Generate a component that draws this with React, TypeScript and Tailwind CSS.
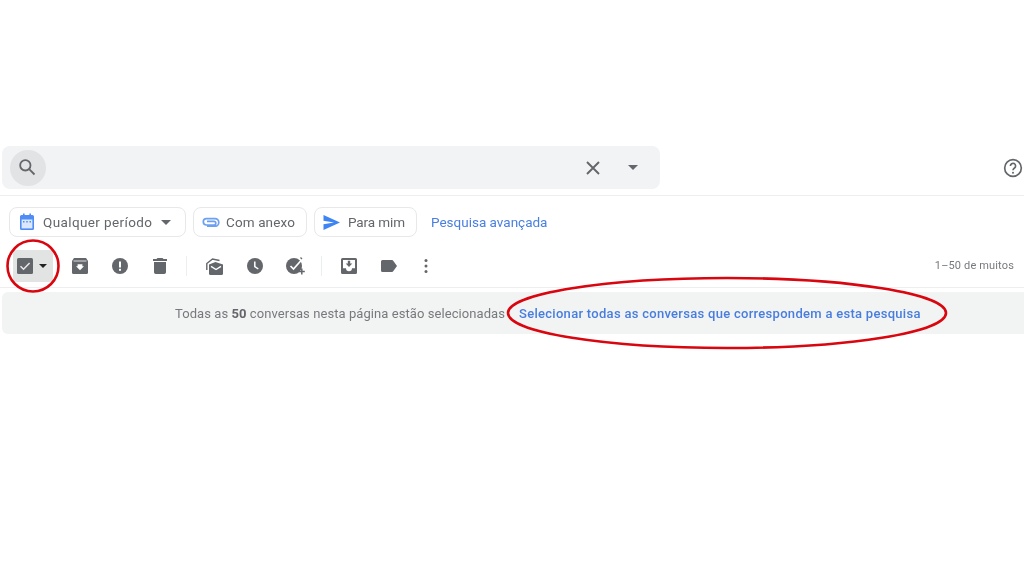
const G = "#63666a";

function Slot({ children, className = "w-10" }: { children: React.ReactNode; className?: string }) {
  return <div className={`flex h-8 items-center justify-center ${className}`}>{children}</div>;
}

function Chip({ icon, label, caret, className, textClass }: { icon: React.ReactNode; label: string; caret?: boolean; className: string; textClass: string }) {
  return (
    <div className={`flex h-[30px] items-center rounded-lg border border-[#e6e8ea] bg-white ${className}`}>
      {icon}
      <span className={`text-[13.5px] text-[#63666a] ${textClass}`}>{label}</span>
      {caret && (
        <svg width="10" height="5" viewBox="0 0 10 5" fill={G} className="ml-[9px]">
          <path d="M0 0h10L5 5z" />
        </svg>
      )}
    </div>
  );
}

export default function App() {
  return (
    <div className="relative h-[576px] w-[1024px] overflow-hidden bg-white pt-[146px] font-['Roboto',sans-serif] blur-[0.45px]">
      <div className="flex h-[43px] items-center pl-[2px] pr-[1px]">
        <div className="flex h-[43px] w-[658px] items-center rounded-lg bg-[#f1f3f4] pl-2 pr-[22px]">
          <div className="flex h-9 w-9 items-center justify-center rounded-full bg-[#e2e3e5]">
            <svg width="20" height="20" viewBox="0 0 24 24" fill="none" stroke={G} strokeWidth="2.2" className="-ml-[2px] -mt-[2px]">
              <circle cx="10" cy="10" r="6.2" />
              <path d="M14.6 14.6 21 21" />
            </svg>
          </div>
          <div className="flex-1" />
          <svg width="18" height="18" viewBox="0 0 18 18" fill="none" stroke={G} strokeWidth="1.9" className="mr-[26px]">
            <path d="M3 3l12 12M15 3 3 15" />
          </svg>
          <svg width="10" height="5" viewBox="0 0 10 5" fill={G}>
            <path d="M0 0h10L5 5z" />
          </svg>
        </div>
        <div className="flex-1" />
        <svg width="20" height="20" viewBox="0 0 24 24" fill="none" stroke={G} strokeWidth="2">
          <circle cx="12" cy="12" r="10" />
          <path d="M8.9 9.5a3.1 3.1 0 1 1 4.9 2.5c-1.1.8-1.8 1.4-1.8 2.8" />
          <circle cx="12" cy="17.6" r="1.2" fill={G} stroke="none" />
        </svg>
      </div>

      <div className="mt-[6px] h-px bg-[#eceef0]" />

      <div className="mt-[11px] flex items-center pl-[9px]">
        <Chip
          className="w-[177px] pl-2"
          textClass="tracking-[0.38px]"
          caret
          label="Qualquer período"
          icon={
            <svg width="18" height="18" viewBox="0 0 18 18" className="mr-[7px] shrink-0">
              <path d="M5 0.500h1.600V2h4.800V0.500H13V2h1.500A1.500 1.500 0 0 1 16 3.500v12a1.500 1.500 0 0 1-1.500 1.500h-11A1.500 1.500 0 0 1 2 15.500v-12A1.500 1.500 0 0 1 3.500 2H5z" fill="#4f8df5" />
              <rect x="3.600" y="6.500" width="10.800" height="8.900" fill="#dbe8fd" />
              <path d="M5 8h1.500v1.500H5zM8.250 8h1.500v1.500h-1.500zM11.500 8H13v1.500h-1.500z" fill="#4f8df5" />
            </svg>
          }
        />
        <Chip
          className="ml-[7px] w-[114px] pl-2"
          textClass="tracking-[0.12px]"
          label="Com anexo"
          icon={
            <svg width="18" height="10" viewBox="0 0 18 10" fill="none" className="mr-[6px] shrink-0">
              <path d="M5 9.200h8a3.800 3.800 0 0 0 0-7.600H4.500a3.200 3.200 0 0 0 0 6.400H12a1.800 1.800 0 0 0 0-3.600H5" stroke="#6ea0f2" strokeWidth="1.700" />
            </svg>
          }
        />
        <Chip
          className="ml-[7px] w-[103px] pl-2"
          textClass="tracking-[-0.1px]"
          label="Para mim"
          icon={
            <svg width="17" height="15" viewBox="0 0 17 15" className="mr-[8px] shrink-0">
              <path d="M0.500 0 17 7.500 0.500 15V9.300L11 7.500 0.500 5.700z" fill="#3f84f3" />
            </svg>
          }
        />
        <span className="ml-[14px] text-[13.5px] tracking-[0px] text-[#4a7fe0]">Pesquisa avançada</span>
      </div>

      <div className="mt-[13px] flex h-8 items-center pl-[13px] pr-[10px]">
        <div className="flex h-8 w-10 items-center rounded-sm bg-[#e2e3e3] pl-[4px]">
          <svg width="16" height="16" viewBox="0 0 16 16">
            <rect width="16" height="16" rx="1.500" fill={G} />
            <path d="M3.500 8.300 6.500 11.200 12.600 5" fill="none" stroke="#e8e8e8" strokeWidth="1.500" />
          </svg>
          <svg width="8" height="4" viewBox="0 0 8 4" fill="#222" className="ml-[6px]">
            <path d="M0 0h8L4 4z" />
          </svg>
        </div>
        <Slot className="ml-[7px] w-10">
          <svg width="16" height="16" viewBox="0 0 16 16" fill={G}>
            <path d="M2 0h12l2 3v11.500a1.500 1.500 0 0 1-1.500 1.500h-13A1.500 1.500 0 0 1 0 14.500V3z" />
            <path d="M1.500 3h13" stroke="#fff" strokeWidth="0.800" />
            <path d="M5 5.500h6V8h2l-5 5-5-5h2z" fill="#fff" transform="translate(1.600 1.800) scale(.8)" />
          </svg>
        </Slot>
        <Slot>
          <svg width="16" height="16" viewBox="0 0 16 16" fill={G}>
            <circle cx="8" cy="8" r="8" />
            <rect x="7" y="3.500" width="2" height="6" fill="#fff" />
            <rect x="7" y="10.800" width="2" height="2" fill="#fff" />
          </svg>
        </Slot>
        <Slot>
          <svg width="14" height="16" viewBox="0 0 14 16" fill={G}>
            <path d="M4.500 0h5l1 1H14v2H0V1h3.500zM1 4h12v10.200A1.800 1.800 0 0 1 11.200 16H2.800A1.800 1.800 0 0 1 1 14.200z" />
          </svg>
        </Slot>
        <div className="ml-[6px] h-5 w-px bg-[#eceef0]" />
        <Slot className="ml-[8px] w-10">
          <svg width="18" height="17" viewBox="0 0 18 17" fill="none">
            <path d="M0.800 12V5.500L6.500 1 13.500 2.500" stroke={G} strokeWidth="1.400" />
            <path d="M3 6.500 9.500 4 17 6.500v9A1.500 1.500 0 0 1 15.500 17h-11A1.500 1.500 0 0 1 3 15.500z" fill={G} />
            <path d="M5 8.300 10 11.500l5-3.200" stroke="#fff" strokeWidth="1.400" />
          </svg>
        </Slot>
        <Slot>
          <svg width="16" height="16" viewBox="0 0 16 16">
            <circle cx="8" cy="8" r="8" fill={G} />
            <path d="M7.800 3.500V8.500L11.300 11" fill="none" stroke="#fff" strokeWidth="1.500" />
          </svg>
        </Slot>
        <Slot>
          <svg width="19" height="18" viewBox="0 0 19 18">
            <circle cx="8" cy="9" r="8" fill={G} />
            <path d="M4.500 9 7.500 12 15.500 3" fill="none" stroke="#fff" strokeWidth="1.700" />
            <path d="M14.500 0.500 16 2" stroke={G} strokeWidth="1.200" />
            <path d="M15.800 11.500v6M12.800 14.500h6" stroke={G} strokeWidth="1.500" />
          </svg>
        </Slot>
        <div className="ml-[6px] h-5 w-px bg-[#eceef0]" />
        <Slot className="ml-[7px] w-10">
          <svg width="16" height="16" viewBox="0 0 16 16">
            <path d="M1.500 0h13A1.500 1.500 0 0 1 16 1.500v13a1.500 1.500 0 0 1-1.500 1.500h-13A1.500 1.500 0 0 1 0 14.500v-13A1.500 1.500 0 0 1 1.500 0z" fill={G} />
            <path d="M2 2h12v8.200h-3a3 3 0 0 1-6 0H2z" fill="#fff" />
            <path d="M6.800 2.800h2.400v2.700h2.100L8 9 4.700 5.500h2.100z" fill={G} />
          </svg>
        </Slot>
        <Slot>
          <svg width="16" height="12" viewBox="0 0 16 12" fill={G}>
            <path d="M1.500 0H11c.5 0 1 .3 1.200.7L16 6l-3.800 5.300c-.2.400-.7.700-1.200.700H1.500A1.500 1.500 0 0 1 0 10.500v-9A1.500 1.500 0 0 1 1.500 0z" />
          </svg>
        </Slot>
        <Slot className="ml-[-3px] w-10">
          <svg width="4" height="14" viewBox="0 0 4 14" fill={G}>
            <circle cx="2" cy="1.600" r="1.500" />
            <circle cx="2" cy="7" r="1.500" />
            <circle cx="2" cy="12.400" r="1.500" />
          </svg>
        </Slot>
        <div className="flex-1" />
        <span className="text-[11px] tracking-[0.15px] text-[#777a7d]">1–50 de muitos</span>
      </div>

      <div className="mt-[5px] h-px bg-[#eceef0]" />

      <div className="ml-[2px] mt-[4px] flex h-[42px] items-center rounded-l-md bg-[#f2f3f3] pb-[-1px] pl-[173px] pt-px">
        <span className="text-[13px] tracking-[0.07px] text-[#777a7d]">
          Todas as <b className="font-bold text-[#63666a]">50</b> conversas nesta página estão selecionadas
        </span>
        <span className="ml-[14px] text-[13px] font-medium tracking-[0.29px] text-[#477ddf]">
          Selecionar todas as conversas que correspondem a esta pesquisa
        </span>
      </div>

      <svg className="pointer-events-none absolute left-0 top-0" width="1024" height="576" fill="none" stroke="#d9060f" strokeWidth="2.600">
        <circle cx="33" cy="266" r="25.500" />
        <ellipse cx="727" cy="313" rx="219" ry="35" />
      </svg>
    </div>
  );
}
